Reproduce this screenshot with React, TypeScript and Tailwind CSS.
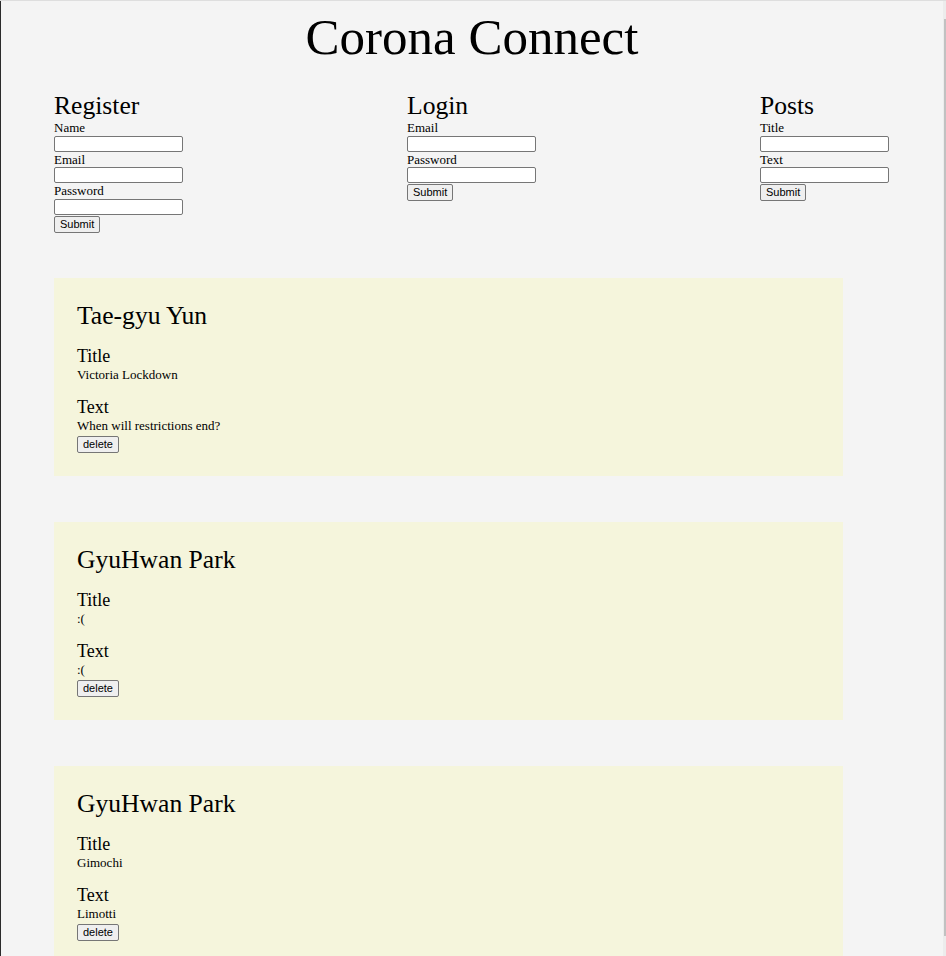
import React from "react";

const serif = { fontFamily: '"Liberation Serif", "Times New Roman", serif' };

function Btn({ children, extra = "" }: { children: React.ReactNode; extra?: string }) {
  return (
    <button
      className={
        "block shrink-0 h-[17px] px-[5px] border border-[#767676] rounded-[2px] bg-[#efefef] text-[11px] leading-[13px] text-black [font-family:'Liberation_Sans',Arial,sans-serif] " +
        extra
      }
    >
      {children}
    </button>
  );
}

function Field({ label }: { label: string }) {
  return (
    <>
      <label className="block text-[13px] leading-[15.5px]">{label}</label>
      <input className="block w-[129px] h-[16px] bg-white border border-[#767676] rounded-[2px]" />
    </>
  );
}

function FormCol({ title, fields }: { title: string; fields: string[] }) {
  return (
    <div className="flex flex-col items-start w-[129px]">
      <h2 className="text-[25.6px] leading-[28px] whitespace-nowrap">{title}</h2>
      {fields.map((f) => (
        <Field key={f} label={f} />
      ))}
      <Btn extra="mt-px">Submit</Btn>
    </div>
  );
}

function Card({ name, title, text }: { name: string; title: string; text: string }) {
  return (
    <div className="w-[789px] bg-[#f5f5dc] px-[23px] pt-[23px] pb-[23px] flex flex-col items-start">
      <h2 className="text-[25.6px] leading-[30px]">{name}</h2>
      <h3 className="mt-[15px] text-[18px] leading-[21px]">Title</h3>
      <p className="text-[13px] leading-[15px]">{title}</p>
      <h3 className="mt-[15px] text-[18px] leading-[21px]">Text</h3>
      <p className="text-[13px] leading-[15px]">{text}</p>
      <Btn extra="mt-[3px]">delete</Btn>
    </div>
  );
}

export default function App() {
  return (
    <div className="h-[956px] w-[946px] overflow-hidden flex flex-col bg-[#f4f4f4] text-black" style={serif}>
      <div className="h-px bg-[#dedede] shrink-0" />
      <div className="flex flex-1 min-h-0">
        <div className="w-px bg-[#2b2b2b] shrink-0" />
        <main className="flex-1 min-w-0 pt-[7px] px-[53px]">
          <h1 className="text-center text-[51px] leading-[58px] whitespace-nowrap">Corona Connect</h1>
          <div className="mt-[26px] w-[835px] flex justify-between items-start">
            <FormCol title="Register" fields={["Name", "Email", "Password"]} />
            <FormCol title="Login" fields={["Email", "Password"]} />
            <FormCol title="Posts" fields={["Title", "Text"]} />
          </div>
          <div className="mt-[45px] flex flex-col gap-[46px]">
            <Card name="Tae-gyu Yun" title="Victoria Lockdown" text="When will restrictions end?" />
            <Card name="GyuHwan Park" title=":(" text=":(" />
            <Card name="GyuHwan Park" title="Gimochi" text="Limotti" />
          </div>
        </main>
        <div className="w-[3px] shrink-0 bg-[#ececec] pt-[18px] flex justify-end">
          <div className="w-[2px] h-[917px] bg-[#c1c1c1]" />
        </div>
      </div>
    </div>
  );
}
